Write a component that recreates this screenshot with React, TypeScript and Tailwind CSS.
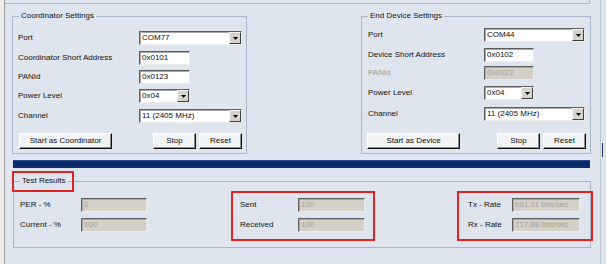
import type { ReactNode } from 'react'

function GroupBox({ title, className, children }: { title: string; className: string; children: ReactNode }) {
  return (
    <div className={`relative border border-[#a9b7c8] ${className}`}>
      <span className="absolute top-[-6px] left-[6px] px-[2px] bg-[#dee5ee] leading-[10px]">{title}</span>
      {children}
    </div>
  )
}

function TextBox({ value, width, disabled }: { value: string; width: string; disabled?: boolean }) {
  return (
    <div
      className={`${width} h-[14px] flex items-center pl-[2px] border border-t-[#5e5e5e] border-l-[#5e5e5e] border-r-[#ececec] border-b-[#ececec] shadow-[inset_1px_1px_0_#a8a8a8] ${
        disabled ? 'bg-[#d4d0c8] text-[#a7a39b]' : 'bg-white text-[#0e0e0e]'
      }`}
    >
      {value}
    </div>
  )
}

function Select({ value, width }: { value: string; width: string }) {
  return (
    <div
      className={`${width} h-[14px] flex items-center bg-white border border-t-[#5e5e5e] border-l-[#5e5e5e] border-r-[#ececec] border-b-[#ececec] shadow-[inset_1px_1px_0_#a8a8a8]`}
    >
      <span className="flex-1 pl-[2px] text-[#0e0e0e]">{value}</span>
      <div className="w-[12px] h-[12px] flex items-center justify-center bg-[#d6d3cd] border border-t-[#f8f8f8] border-l-[#f8f8f8] border-r-[#404040] border-b-[#404040]">
        <svg width="5" height="3" viewBox="0 0 5 3">
          <path d="M0 0h5L2.5 3z" fill="#000" />
        </svg>
      </div>
    </div>
  )
}

function Button({ label, width, className = '' }: { label: string; width: string; className?: string }) {
  return (
    <div
      className={`${width} ${className} h-[16px] flex items-center justify-center bg-[#f1f3f5] border border-t-[#ffffff] border-l-[#ffffff] border-r-[#111111] border-b-[#111111] shadow-[inset_-1px_-1px_0_#8a8a8a] text-[#0e0e0e]`}
    >
      {label}
    </div>
  )
}

function Row({ label, height, labelWidth, disabled, children }: {
  label: string; height: string; labelWidth: string; disabled?: boolean; children: ReactNode
}) {
  return (
    <div className={`flex items-center ${height}`}>
      <span className={`${labelWidth} ${disabled ? 'text-[#9d9d9d]' : ''}`}>{label}</span>
      {children}
    </div>
  )
}

function Stat({ label, value, labelWidth, inputWidth }: { label: string; value: string; labelWidth: string; inputWidth: string }) {
  return (
    <div className="flex items-center h-[15px]">
      <span className={labelWidth}>{label}</span>
      <TextBox value={value} width={inputWidth} disabled />
    </div>
  )
}

export default function App() {
  return (
    <div className="relative flex w-[606px] h-[264px] overflow-hidden bg-[#dee5ee] text-[#111111] text-[8px] leading-[10px] font-['Liberation_Sans',Arial,sans-serif]">
      {/* left frame strip */}
      <div className="w-[5px] shrink-0 bg-[#ececec] border-r border-[#9c9c9c]" />

      <div className="w-[596px] shrink-0 flex flex-col border-r border-[#c4cad2]">
        {/* bottom edge of the panel above */}
        <div className="w-[585px] h-[4px] shrink-0 border-b border-r border-[#a9b7c8]" />

        {/* settings */}
        <div className="flex mt-[12px]">
          <GroupBox title="Coordinator Settings" className="ml-[7px] w-[235px] h-[138px] pl-[5px] pt-[11px]">
            <Row label="Port" height="h-[20px]" labelWidth="w-[121px]"><Select value="COM77" width="w-[103px]" /></Row>
            <Row label="Coordinator Short Address" height="h-[19px]" labelWidth="w-[121px]"><TextBox value="0x0101" width="w-[51px]" /></Row>
            <Row label="PANId" height="h-[19px]" labelWidth="w-[121px]"><TextBox value="0x0123" width="w-[51px]" /></Row>
            <Row label="Power Level" height="h-[20px]" labelWidth="w-[121px]"><Select value="0x04" width="w-[51px]" /></Row>
            <Row label="Channel" height="h-[20px]" labelWidth="w-[121px]"><Select value="11 (2405 MHz)" width="w-[103px]" /></Row>
            <div className="flex mt-[7px] pl-[1px]">
              <Button label="Start as Coordinator" width="w-[93px]" />
              <Button label="Stop" width="w-[43px]" className="ml-[41px]" />
              <Button label="Reset" width="w-[43px]" className="ml-[3px]" />
            </div>
          </GroupBox>

          <GroupBox title="End Device Settings" className="ml-[114px] w-[230px] h-[138px] pl-[6px] pt-[8px]">
            <Row label="Port" height="h-[20px]" labelWidth="w-[116px]"><Select value="COM44" width="w-[101px]" /></Row>
            <Row label="Device Short Address" height="h-[20px]" labelWidth="w-[116px]"><TextBox value="0x0102" width="w-[50px]" /></Row>
            <Row label="PANId" height="h-[16px]" labelWidth="w-[116px]" disabled><TextBox value="0x0123" width="w-[50px]" disabled /></Row>
            <Row label="Power Level" height="h-[24px]" labelWidth="w-[116px]"><Select value="0x04" width="w-[50px]" /></Row>
            <Row label="Channel" height="h-[18px]" labelWidth="w-[116px]"><Select value="11 (2405 MHz)" width="w-[101px]" /></Row>
            <div className="flex mt-[10px] -ml-[1px]">
              <Button label="Start as Device" width="w-[93px]" />
              <Button label="Stop" width="w-[43px]" className="ml-[37px]" />
              <Button label="Reset" width="w-[43px]" className="ml-[3px]" />
            </div>
          </GroupBox>
        </div>

        {/* progress bar */}
        <div className="ml-[8px] mt-[6px] w-[577px] h-[8px] bg-[#0b2c6c] border-t border-[#2d4f8c]" />

        {/* test results */}
        <GroupBox title="Test Results" className="ml-[8px] mt-[13px] w-[578px] h-[67px] pl-[6px] pt-[15px]">
          <div className="flex">
            <div className="flex flex-col gap-[5px]">
              <Stat label="PER - %" value="0" labelWidth="w-[61px]" inputWidth="w-[66px]" />
              <Stat label="Current - %" value="100" labelWidth="w-[61px]" inputWidth="w-[66px]" />
            </div>
            <div className="flex flex-col gap-[5px] ml-[93px]">
              <Stat label="Sent" value="100" labelWidth="w-[58px]" inputWidth="w-[67px]" />
              <Stat label="Received" value="100" labelWidth="w-[58px]" inputWidth="w-[67px]" />
            </div>
            <div className="flex flex-col gap-[5px] ml-[103px]">
              <Stat label="Tx - Rate" value="661.11 bits/sec" labelWidth="w-[44px]" inputWidth="w-[68px]" />
              <Stat label="Rx - Rate" value="717.88 bits/sec" labelWidth="w-[44px]" inputWidth="w-[68px]" />
            </div>
          </div>
        </GroupBox>
      </div>

      {/* small mark at the right edge */}
      <div className="absolute left-[602px] top-[143px] w-[1px] h-[14px] bg-[#1d2f5c]" />

      {/* red annotation boxes */}
      <div className="absolute left-[12px] top-[171px] w-[62px] h-[21px] border-2 border-[#e02424]" />
      <div className="absolute left-[231px] top-[191px] w-[144px] h-[50px] border-2 border-[#e02424]" />
      <div className="absolute left-[457px] top-[191px] w-[136px] h-[50px] border-2 border-[#e02424]" />
    </div>
  )
}
